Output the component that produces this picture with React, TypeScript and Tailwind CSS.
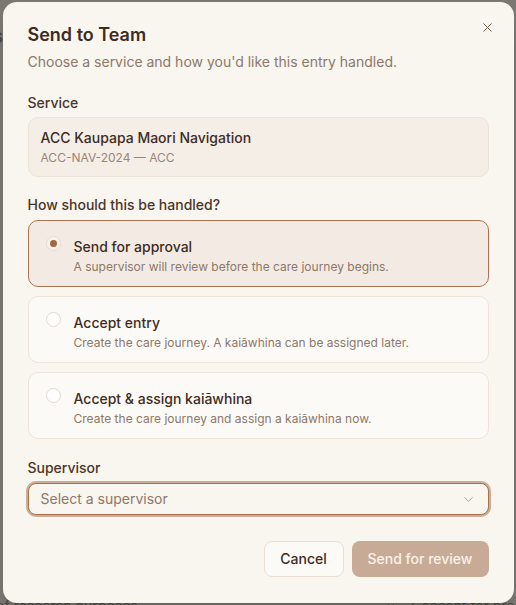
import React, { useState } from 'react';
import { X, ChevronDown } from 'lucide-react';

const OPTIONS = [
  { id: 'approval', title: 'Send for approval', desc: 'A supervisor will review before the care journey begins.' },
  { id: 'accept', title: 'Accept entry', desc: 'Create the care journey. A kaiāwhina can be assigned later.' },
  { id: 'assign', title: 'Accept & assign kaiāwhina', desc: 'Create the care journey and assign a kaiāwhina now.' },
];

const App: React.FC = () => {
  const [choice, setChoice] = useState('approval');

  return (
    <div className="relative w-[516px] h-[605px] overflow-hidden bg-[#7b7873] font-['Inter',sans-serif]">
      {/* dimmed page behind */}
      <div className="absolute inset-0 text-[#2e2a26] text-sm opacity-60">
        <div className="absolute left-[-8px] top-[22px] text-xl font-bold">s</div>
        <div className="absolute left-[-4px] top-[596px] text-sm">of research purposes</div>
        <div className="absolute left-[386px] top-[596px] text-sm">× ⌐ Consent for pro</div>
      </div>

      <div className="relative flex h-full items-center justify-center">
        <div className="relative w-[511px] h-[601px] rounded-[14px] bg-[#f9f5ef] px-[25px] pt-[19px] shadow-xl">
          <button className="absolute right-[19px] top-[18px] text-[#6f5d50]">
            <X size={15} strokeWidth={1.6} />
          </button>

          <h2 className="text-[18px] leading-7 font-semibold text-[#3f2b1f]">Send to Team</h2>
          <p className="mt-[3px] text-sm text-[#8d786a]">Choose a service and how you'd like this entry handled.</p>

          <div className="mt-[21px] text-sm font-medium text-[#4a3529]">Service</div>
          <div className="mt-[4px] h-[60px] rounded-[10px] border border-[#ebe2d8] bg-[#f4eee7] px-[12px] pt-[10px]">
            <div className="text-sm font-medium leading-5 text-[#3f2b1f]">ACC Kaupapa Maori Navigation</div>
            <div className="text-xs leading-5 text-[#9b8677]">ACC-NAV-2024 — ACC</div>
          </div>

          <div className="mt-[18px] text-sm font-medium text-[#4a3529]">How should this be handled?</div>
          <div className="mt-[5px] flex flex-col gap-[9px]">
            {OPTIONS.map((o) => {
              const sel = choice === o.id;
              return (
                <button
                  key={o.id}
                  onClick={() => setChoice(o.id)}
                  className={`flex h-[67px] items-start gap-[13px] rounded-[10px] border px-[17px] pt-[16px] text-left ${sel ? 'border-[#ab7350] bg-[#f3ebe3]' : 'border-[#ede3d9] bg-[#fcfaf7]'}`}
                >
                  <span className={`-mt-[1px] flex h-[15px] w-[15px] shrink-0 items-center justify-center rounded-full border ${sel ? 'border-[#e6dbcf] bg-[#f8f3ed]' : 'border-[#e3d8cc] bg-white'}`}>
                    {sel && <span className="h-[7px] w-[7px] rounded-full bg-[#a4663f]" />}
                  </span>
                  <span className="flex flex-col">
                    <span className="text-sm font-medium leading-5 text-[#3f2b1f]">{o.title}</span>
                    <span className="mt-[2px] text-xs leading-4 text-[#8d786a]">{o.desc}</span>
                  </span>
                </button>
              );
            })}
          </div>

          <div className="mt-[19px] text-sm font-medium text-[#4a3529]">Supervisor</div>
          <div className="mt-[3px] rounded-[10px] bg-[#caae98] p-[2px] -mx-[2px]">
            <div className="flex h-[32px] items-center justify-between rounded-[8px] border border-[#a8704b] bg-[#f9f5ef] px-[12px]">
              <span className="text-sm text-[#8d786a]">Select a supervisor</span>
              <ChevronDown size={15} strokeWidth={1.5} className="text-[#a8978a]" />
            </div>
          </div>

          <div className="mt-[24px] flex justify-end gap-[8px]">
            <button className="h-[36px] w-[80px] rounded-[8px] border border-[#e8ded3] bg-[#fcfaf7] text-sm font-medium text-[#3f2b1f]">
              Cancel
            </button>
            <button className="h-[36px] w-[137px] rounded-[8px] bg-[#c8ab96] text-sm font-medium text-[#f8f1ea]">
              Send for review
            </button>
          </div>
        </div>
      </div>
    </div>
  );
};

export default App;
